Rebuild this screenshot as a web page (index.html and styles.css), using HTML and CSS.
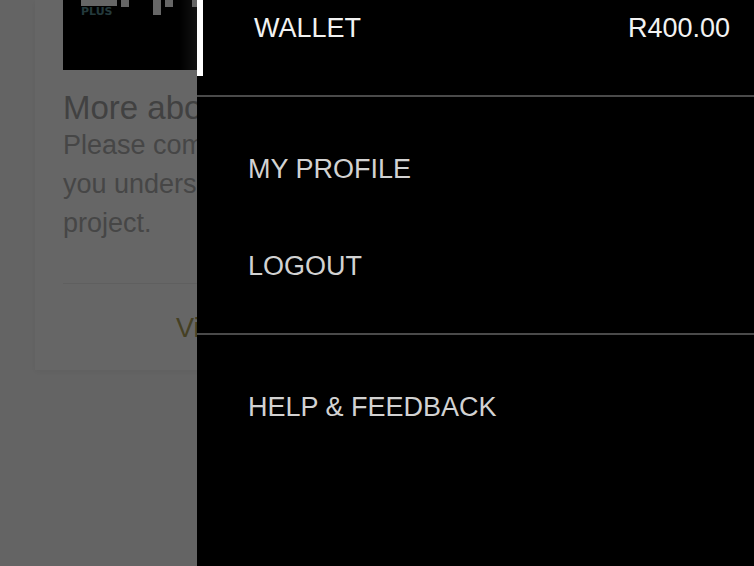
FILE: index.html
```html
<!DOCTYPE html>
<html lang="en">
<head>
    <meta charset="UTF-8">
    <meta name="viewport" content="width=device-width, initial-scale=1.0">
    <title>Wallet</title>
    <link rel="stylesheet" href="styles.css">
</head>
<body>
    <!-- Page behind the menu -->
    <main class="page">
        <article class="card">
            <div class="banner">
                <svg class="banner-logo" width="116" height="16" viewBox="0 0 116 16" fill="#fff" aria-hidden="true">
                    <rect x="0" y="0" width="36" height="6"/>
                    <rect x="40" y="0" width="8" height="7"/>
                    <rect x="72" y="0" width="8" height="15"/>
                    <rect x="84" y="0" width="8" height="7"/>
                    <rect x="111" y="0" width="5" height="7"/>
                </svg>
                <span class="banner-label">PLUS</span>
            </div>
            <h1>More abo</h1>
            <p>Please com<br>you unders<br>project.</p>
            <div class="card-footer">
                <a href="#">Vi</a>
            </div>
        </article>
    </main>

    <div class="overlay"></div>

    <!-- Side menu -->
    <nav class="drawer">
        <div class="group">
            <a class="wallet active" href="#">
                <span>WALLET</span>
                <span>R400.00</span>
            </a>
        </div>
        <div class="group">
            <a class="item" href="#">MY PROFILE</a>
            <a class="item" href="#">LOGOUT</a>
        </div>
        <div class="group">
            <a class="item" href="#">HELP &amp; FEEDBACK</a>
        </div>
    </nav>
</body>
</html>
```
FILE: styles.css
```css
* {
    box-sizing: border-box;
}

body {
    margin: 0;
    min-height: 100vh;
    overflow: hidden;
    background: #fafafa;
    font-family: "Liberation Sans", Arial, sans-serif;
    font-size: 27px;
}

a {
    text-decoration: none;
}

/* Page */
.page {
    padding: 0 35px;
}

.card {
    padding: 0 28px;
    background: #fff;
    box-shadow: 0 2px 6px rgba(0, 0, 0, 0.05);
    white-space: nowrap;
}

.banner {
    height: 70px;
    padding-left: 18px;
    background: linear-gradient(to right, #000 116px, #2c2c2c 134px);
}

.banner-logo {
    display: block;
}

.banner-label {
    display: block;
    margin-top: -10px;
    font-family: "DejaVu Sans", sans-serif;
    font-size: 11px;
    font-weight: bold;
    line-height: 12px;
    color: #5a9096;
}

.card h1 {
    margin: 0;
    padding-top: 19px;
    font-size: 33px;
    font-weight: normal;
    line-height: 37px;
    color: #a4a4a4;
}

.card p {
    margin: 0;
    line-height: 39px;
    color: #b0b0b0;
}

.card-footer {
    margin-top: 40px;
    padding: 25px 113px 23px;
    border-top: 1px solid #eee;
    line-height: 38px;
}

.card-footer a {
    color: #aca058;
}

/* Overlay */
.overlay {
    position: fixed;
    inset: 0;
    background: rgba(0, 0, 0, 0.6);
}

/* Side menu */
.drawer {
    position: fixed;
    top: 0;
    right: 0;
    bottom: 0;
    left: 197px;
    background: #000;
}

.group {
    padding: 24px 0 18px;
    border-top: 2px solid #4a4a4a;
}

.group:first-child {
    padding: 0 0 19px;
    border-top: none;
}

.wallet {
    display: flex;
    justify-content: space-between;
    padding: 12px 24px 32px 51px;
    line-height: 32px;
    color: #f2f2f2;
}

.wallet.active {
    border-left: 6px solid #fff;
}

.item {
    display: block;
    padding-left: 51px;
    line-height: 97px;
    color: #d2d2d2;
}
```
